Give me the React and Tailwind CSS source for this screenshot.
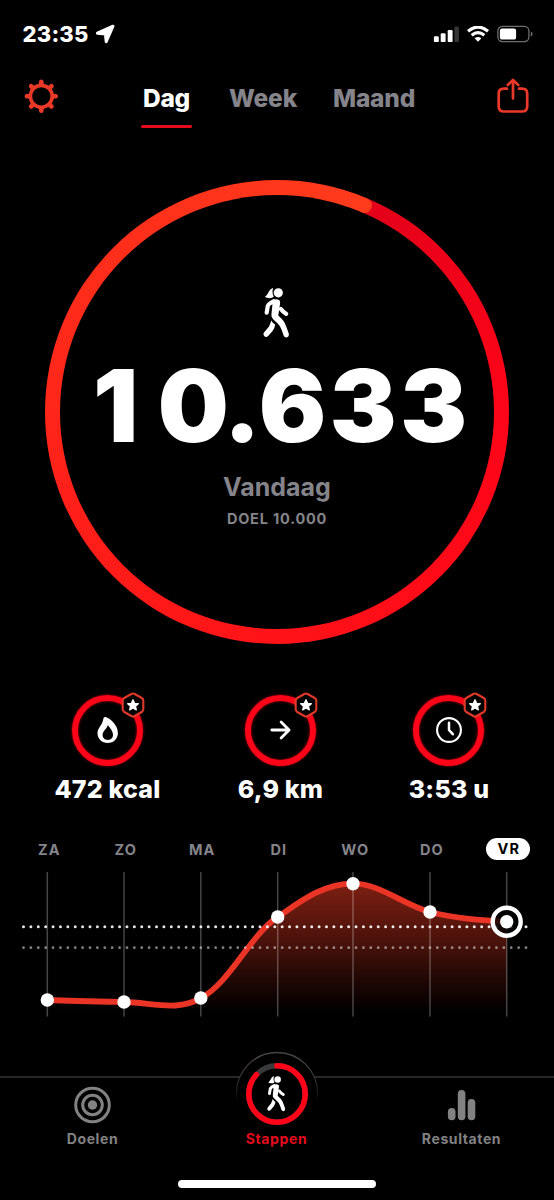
import React from "react";

const stats = [
  { icon: "flame", value: "472 kcal" },
  { icon: "arrow", value: "6,9 km" },
  { icon: "clock", value: "3:53 u" },
];

const days = [
  { label: "ZA", x: 47.3, y: 1000 },
  { label: "ZO", x: 124, y: 1002 },
  { label: "MA", x: 200.8, y: 998 },
  { label: "DI", x: 277.7, y: 917 },
  { label: "WO", x: 353, y: 883.7 },
  { label: "DO", x: 430, y: 912 },
  { label: "VR", x: 506.7, y: 921.7 },
];

const curve =
  "M47.3 1000 C75 1001 100 1001.5 124 1002 C152 1002.5 178 1012 200.8 998 C230 983 250 935 277.7 917 C301 901 323 883.7 353 883.7 C381 883.7 403 905 430 912 C455 918.5 480 920 506.7 921.7";

const Walker = ({ className }) => (
  <svg viewBox="0 0 80 75" className={className} fill="none" stroke="#fff" strokeLinecap="round" strokeLinejoin="round">
    <circle cx="41.3" cy="17.8" r="4.6" fill="#fff" stroke="none" />
    <path d="M36.2 13 C32 13.5 31.8 19 27.8 22 C31 23.6 35 23.6 36.8 21.5 C35.2 19 35.2 15.5 36.2 13Z" fill="#fff" stroke="none" />
    {/* torso and front leg */}
    <path
      d="M34.5 26.5 Q38.5 22.6 42.6 25.5 Q43.4 26.5 43 29 L41.3 40.6 Q46.8 45.5 48.2 49 Q50.5 54.5 51.9 59 Q52 62 49.5 62.5 Q47.4 62.6 46.6 60.6 Q44.6 54 42.8 51 Q40 47.5 36.4 44.5 Q34 42.5 34.4 39.5 L35.4 30Z"
      fill="#fff"
      stroke="none"
    />
    {/* arms */}
    <path d="M36.5 26.3 Q31.4 28.6 30.8 31 L29.7 37.6" strokeWidth="4.2" />
    <path d="M43.8 34 Q46 37 49.2 38.8" strokeWidth="4.2" />
    {/* back leg */}
    <path d="M34.2 45.4 Q36 48.4 38.2 49.6 Q37.8 53 35.6 56 L31.6 60.6 Q29.8 62.8 27.8 61.4 Q25.6 59.8 27 57.6 L32 51.4 Q33.4 48.6 34.2 45.4Z" fill="#fff" stroke="none" />
  </svg>
);

const StatIcon = ({ name }) => {
  if (name === "flame") {
    return (
      <svg viewBox="0 0 28 28" className="h-7 w-7">
        <path
          fill="#fff"
          fillRule="evenodd"
          d="M12.8 1.1 C16.4 2.2 24.9 8.5 24.9 17 C24.9 23 20.4 27 14.8 27 C8.9 27 4.5 23 4.5 17 C4.5 12 8.9 10 10.2 3.5 C10.5 1.5 11.3 .7 12.8 1.1Z M14.9 9 C14.1 12.5 9.6 15 9.6 18.8 C9.6 22 11.8 24 14.8 24 C17.8 24 20 22 20 18.8 C20 15 16.9 12 14.9 9Z"
        />
      </svg>
    );
  }
  if (name === "arrow") {
    return (
      <svg viewBox="0 0 28 28" className="h-7 w-7" fill="none" stroke="#fff" strokeWidth="2.8" strokeLinecap="round" strokeLinejoin="round">
        <path d="M5.8 14 H22.8 M15.1 6 L23.1 14 L15.1 22" />
      </svg>
    );
  }
  return (
    <svg viewBox="0 0 28 28" className="h-7 w-7" fill="none" stroke="#fff" strokeLinecap="round" strokeLinejoin="round">
      <circle cx="14" cy="14" r="11.9" strokeWidth="2.1" />
      <path d="M14 6.8 V14 L17.8 18.2" strokeWidth="2.5" />
    </svg>
  );
};

const Badge = () => (
  <svg viewBox="0 0 26 26" className="absolute -right-[1px] top-0 h-[26px] w-[26px]">
    <path
      d="M11.3 2 Q13 1.1 14.7 2 L21.7 6 Q23.3 7 23.3 8.8 V17.2 Q23.3 19 21.7 20 L14.7 24 Q13 24.9 11.3 24 L4.3 20 Q2.7 19 2.7 17.2 V8.8 Q2.7 7 4.3 6Z"
      fill="#000"
      stroke="#df392a"
      strokeWidth="2.1"
    />
    <path
      d="M13 7.8 L14.6 11.3 L18.3 11.7 L15.5 14.2 L16.3 17.9 L13 16 L9.7 17.9 L10.5 14.2 L7.7 11.7 L11.4 11.3Z"
      fill="#fff"
      stroke="#fff"
      strokeWidth="1.3"
      strokeLinejoin="round"
    />
  </svg>
);

const StatusBar = () => (
  <div className="flex h-[68px] items-center justify-between pl-[22.5px] pr-[21px]">
    <div className="flex items-center gap-[6px]">
      <span className="text-[22px] font-extrabold leading-none tracking-[0.2px]">23:35</span>
      <svg viewBox="0 0 20 20" className="h-5 w-5">
        <path d="M18 2.2 L11.2 17.6 L10.4 10 L2.4 9.2Z" fill="#fff" stroke="#fff" strokeWidth="3" strokeLinejoin="round" />
      </svg>
    </div>
    <div className="flex items-center gap-2">
      <svg viewBox="0 0 26 18" className="h-[18px] w-[26px]" fill="#fff">
        <rect x="0.9" y="11.2" width="4.9" height="5.9" rx="1.2" />
        <rect x="7.7" y="8.2" width="4.9" height="8.9" rx="1.2" />
        <rect x="14.7" y="5" width="4.9" height="12.1" rx="1.2" />
        <rect x="21.4" y="1.4" width="4.5" height="15.7" rx="1.2" fill="#363638" />
      </svg>
      <svg viewBox="0 0 22 16" className="h-4 w-[22px]" fill="none" stroke="#fff" strokeWidth="3.1">
        <path d="M1 5.3 Q11 -3.2 21 5.3" />
        <path d="M4.7 9.2 Q11 3.9 17.3 9.2" />
        <path d="M7.6 12.3 Q11 9.5 14.4 12.3 L11 15.8Z" fill="#fff" stroke="none" />
      </svg>
      <svg viewBox="0 0 36 18" className="h-[18px] w-9">
        <rect x="0.9" y="1.4" width="31" height="15.2" rx="4.5" fill="none" stroke="#6f6f70" strokeWidth="1.3" />
        <rect x="2.9" y="3.6" width="16.2" height="11" rx="2.2" fill="#fff" />
        <path d="M33.8 6.5 Q35.6 7 35.6 9 Q35.6 11 33.8 11.5Z" fill="#6f6f70" />
      </svg>
    </div>
  </div>
);

const Header = () => (
  <div className="flex h-[62px] justify-between px-6">
    <svg viewBox="0 0 34 34" className="mt-[11px] h-[34px] w-[34px]" fill="none" stroke="#ea3928">
      <circle cx="17.3" cy="17.3" r="10.9" strokeWidth="3.6" />
      {[0, 45, 90, 135, 180, 225, 270, 315].map((a) => (
        <g key={a} transform={`rotate(${a} 17.3 17.3)`} fill="#ea3928" stroke="none">
          <path d="M12.8 6.8 L15 4.6 V2.8 Q15 .6 17.3 .6 Q19.6 .6 19.6 2.8 V4.6 L21.8 6.8Z" />
        </g>
      ))}
    </svg>
    <div className="mr-[8px] flex h-[62px] gap-[39px] pl-3 text-[24.5px] font-extrabold leading-[60px] tracking-[-0.2px] text-[#85848b]">
      <div className="relative text-white">
        Dag
        <span className="absolute -left-[2px] bottom-[2px] h-[3px] w-[51px] rounded-full bg-[#e30b1c]" />
      </div>
      <div>Week</div>
      <div className="-ml-[3px]">Maand</div>
    </div>
    <svg viewBox="0 0 34 38" className="mt-[9px] h-[38px] w-[34px]" fill="none" stroke="#ea3928" strokeWidth="2.7" strokeLinecap="round" strokeLinejoin="round">
      <path d="M11 11.7 H8 Q2.7 11.7 2.7 16.5 V29.5 Q2.7 34.5 8 34.5 H26 Q31.2 34.5 31.2 29.5 V16.5 Q31.2 11.7 26 11.7 H23" />
      <path d="M17 21.4 V3.5 M11.8 8 L17 2.9 L22.2 8" />
    </svg>
  </div>
);

const StepRing = () => (
  <div className="relative mx-auto mt-[50px] h-[464px] w-[464px] rounded-full bg-[conic-gradient(from_22.8deg,#e3001a,#fb0418_60deg,#ff0a18_110deg,#ff1918_190deg,#ff2a1a_270deg,#ff3b1c_360deg)] p-[15px]">
    <div className="flex h-full w-full flex-col items-center rounded-full bg-black">
      <Walker className="mt-[80px] h-[75px] w-20" />
      <div className="mt-[11px] flex h-[90px] items-center pl-[6px] text-[100px] font-black leading-[90px]">
        <span className="tracking-[19.5px]">1</span>
        <span className="tracking-[-2px]">0.</span>
        <span className="tracking-[3.5px]">63</span>
        <span>3</span>
      </div>
      <div className="mt-[19px] text-[25px] font-bold leading-[34px] text-[#85848b]">Vandaag</div>
      <div className="mt-[3px] text-[14.5px] font-bold leading-6 tracking-[0.8px] text-[#85848b]">DOEL 10.000</div>
    </div>
    <span className="absolute left-[311.5px] top-[17.5px] h-[15px] w-[15px] rounded-full bg-[#ff3b1c]" />
  </div>
);

const Stats = () => (
  <div className="mt-[48px] flex gap-[1px] pl-[21px]">
    {stats.map((s) => (
      <div key={s.icon} className="flex w-[172px] flex-col items-center last:w-[163px]">
        <div className="relative flex h-[76px] w-[76px] items-center justify-center">
          <div className="flex h-[71px] w-[71px] items-center justify-center rounded-full border-[6px] border-[#ff0418] shadow-[0_0_3px_#b00010,inset_0_0_3px_#b00010]">
            <StatIcon name={s.icon} />
          </div>
          <Badge />
        </div>
        <div className="mt-[6px] pl-[1px] text-[25px] font-extrabold leading-[30px] tracking-[0.2px]">{s.value}</div>
      </div>
    ))}
  </div>
);

const WeekChart = () => (
  <div className="mt-[34px]">
    <div className="flex h-6 pl-[11px] text-[14.5px] font-bold leading-[23px] tracking-[1px] text-[#85848b]">
      {days.map((d) =>
        d.label === "VR" ? (
          <div key={d.label} className="flex w-[76.5px] justify-center">
            <span className="h-[22px] w-11 rounded-full bg-white pl-[1px] text-center leading-[22px] text-black">VR</span>
          </div>
        ) : (
          <div key={d.label} className="w-[76.5px] text-center">{d.label}</div>
        )
      )}
    </div>
    <svg viewBox="0 866 554 154" className="mt-1 block h-[154px] w-[554px]">
      <defs>
        <linearGradient id="area" gradientUnits="userSpaceOnUse" x1="0" y1="882" x2="0" y2="1012">
          <stop offset="0" stopColor="#7e1f12" />
          <stop offset="0.5" stopColor="#45110a" />
          <stop offset="0.75" stopColor="#200704" />
          <stop offset="1" stopColor="#000" />
        </linearGradient>
      </defs>
      <path d={`${curve} V1016 H47.3Z`} fill="url(#area)" />
      {days.map((d) => (
        <path key={d.label} d={`M${d.x} 872 V1016.5`} stroke="#fff" strokeOpacity="0.27" strokeWidth="1.5" />
      ))}
      <path d={curve} fill="none" stroke="#ea3425" strokeWidth="5.8" />
      <path d="M23.5 926.7 H527" stroke="#fff" strokeOpacity="0.9" strokeWidth="3" strokeLinecap="round" strokeDasharray="0 7.39" />
      <path d="M23.5 947.7 H527" stroke="#fff" strokeOpacity="0.5" strokeWidth="2.8" strokeLinecap="round" strokeDasharray="0 7.39" />
      <circle cx="506.7" cy="921.7" r="14" fill="#000" fillOpacity="0.8" stroke="#fff" strokeWidth="4.4" />
      {days.map((d) => (
        <circle key={d.label} cx={d.x} cy={d.y} r="6.7" fill="#fff" />
      ))}
    </svg>
  </div>
);

const TabBar = () => (
  <div className="relative mt-[56px] flex h-[124px] border-t-2 border-[#262627] text-sm font-bold tracking-[0.6px] text-[#828283]">
    <div className="flex w-[184px] flex-col items-center pt-2">
      <svg viewBox="0 0 38 38" className="h-[38px] w-[38px]" fill="none" stroke="#828283" strokeWidth="3">
        <circle cx="19.5" cy="19" r="16.8" />
        <circle cx="19.5" cy="19" r="9.8" />
        <circle cx="19.5" cy="19" r="4.7" fill="#828283" stroke="none" />
      </svg>
      <span className="mt-[5px] pl-[1px] leading-5">Doelen</span>
    </div>
    <div className="flex w-[185px] flex-col items-center">
      <svg viewBox="0 0 84 78" className="-mt-[28px] h-[78px] w-[84px]" fill="none">
        <defs>
          <linearGradient id="notch" x1="0" y1="0" x2="0" y2="1">
            <stop offset="0" stopColor="#4a4445" />
            <stop offset="0.3" stopColor="#3a3637" />
            <stop offset="0.62" stopColor="#000" />
          </linearGradient>
        </defs>
        <circle cx="42" cy="43" r="40.5" fill="#000" stroke="url(#notch)" strokeWidth="1.3" />
        <circle cx="42" cy="44" r="28.2" stroke="#3a3a3c" strokeWidth="5.4" />
        <circle
          cx="42"
          cy="44"
          r="28.2"
          stroke="#ff0418"
          strokeWidth="5.6"
          strokeLinecap="round"
          pathLength="100"
          strokeDasharray="87 100"
          transform="rotate(-90 42 44)"
        />
        <svg x="13.5" y="17" width="56.5" height="53" viewBox="0 0 80 75">
          <Walker />
        </svg>
      </svg>
      <span className="mt-[1px] leading-5 text-[#e50b1d]">Stappen</span>
    </div>
    <div className="flex w-[185px] flex-col items-center pt-2">
      <svg viewBox="0 0 38 38" className="h-[38px] w-[38px]" fill="#828283">
        <rect x="4.9" y="22" width="7.6" height="12.2" rx="3.8" />
        <rect x="14.8" y="4" width="7.6" height="30.2" rx="3.8" />
        <rect x="24.7" y="13" width="7.6" height="21.2" rx="3.8" />
      </svg>
      <span className="mt-[5px] leading-5">Resultaten</span>
    </div>
    <span className="absolute bottom-[12px] left-[178px] h-2 w-[198px] rounded-full bg-white" />
  </div>
);

export default function App() {
  return (
    <div className="h-[1200px] w-[554px] overflow-hidden bg-black font-['Inter',sans-serif] text-white">
      <StatusBar />
      <Header />
      <StepRing />
      <Stats />
      <WeekChart />
      <TabBar />
    </div>
  );
}
